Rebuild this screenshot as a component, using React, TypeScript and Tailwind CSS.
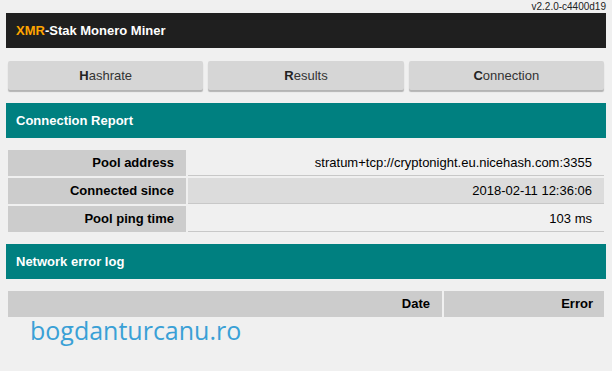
export default function App() {
  const rows = [
    { label: 'Pool address', value: 'stratum+tcp://cryptonight.eu.nicehash.com:3355' },
    { label: 'Connected since', value: '2018-02-11 12:36:06' },
    { label: 'Pool ping time', value: '103 ms' },
  ];
  const tabs = [
    { first: 'H', rest: 'ashrate' },
    { first: 'R', rest: 'esults' },
    { first: 'C', rest: 'onnection' },
  ];

  return (
    <div className="min-h-[371px] w-[612px] bg-[#f0f0f0] font-['Liberation_Sans',Arial,sans-serif] text-[13px]">
      <div className="mx-auto w-[600px]">
        <div className="h-[13px] text-right text-[10px] leading-[14px] text-[#222]">v2.2.0-c4400d19</div>

        <div className="flex h-[35px] items-center bg-[#1f1f1f] px-[10px] text-[13px] font-bold text-white">
          <span className="text-[#ffa500]">XMR</span>-Stak Monero Miner
        </div>

        <div className="mt-[13px] flex gap-[5px] px-[2px]">
          {tabs.map((t) => (
            <div
              key={t.first}
              className="flex h-[29px] flex-1 items-center justify-center rounded-[2px] bg-[#d6d6d6] text-[#333] shadow-[0_2px_1px_rgba(0,0,0,0.25)]"
            >
              <span className="font-bold text-[#222]">{t.first}</span>
              {t.rest}
            </div>
          ))}
        </div>

        <div className="mt-[13px] flex h-[35px] items-center bg-[#008080] px-[10px] font-bold text-white">
          Connection Report
        </div>

        <div className="mt-[12px] grid grid-cols-[178px_1fr] gap-[2px] px-[2px]">
          {rows.map((r, i) => (
            <div key={r.label} className="contents">
              <div className="flex h-[26px] items-center justify-end bg-[#cccccc] pr-[12px] font-bold text-black">
                {r.label}
              </div>
              <div
                className={
                  'flex h-[26px] items-center justify-end border-b border-[#c8c8c8] pr-[12px] text-black ' +
                  (i % 2 === 1 ? 'bg-[#dcdcdc]' : 'bg-[#f0f0f0]')
                }
              >
                {r.value}
              </div>
            </div>
          ))}
        </div>

        <div className="mt-[12px] flex h-[35px] items-center bg-[#008080] px-[10px] font-bold text-white">
          Network error log
        </div>

        <div className="mt-[12px] grid grid-cols-[434px_1fr] gap-[2px] px-[2px]">
          <div className="flex h-[26px] items-center justify-end bg-[#cccccc] pr-[12px] font-bold text-black">Date</div>
          <div className="flex h-[26px] items-center justify-end bg-[#cccccc] pr-[11px] font-bold text-black">Error</div>
        </div>

        <div className="-mt-[2px] pl-[24px] font-['Open_Sans',sans-serif] text-[25px] leading-[30px] text-[#3aa0d6]">
          bogdanturcanu.ro
        </div>
      </div>
    </div>
  );
}
